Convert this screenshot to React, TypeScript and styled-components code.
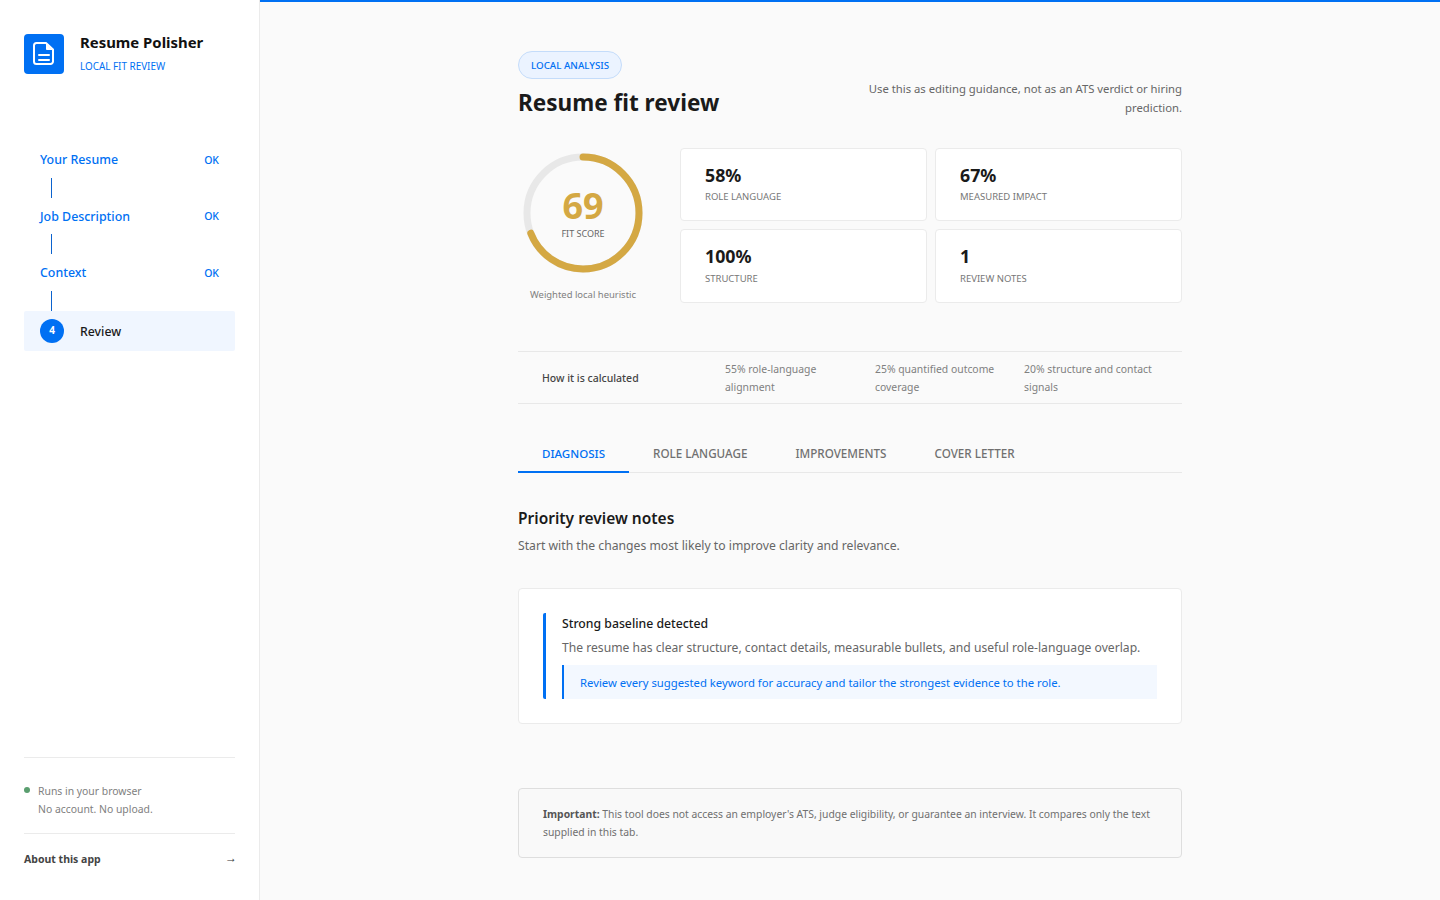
import React from "react";
import styled, { createGlobalStyle } from "styled-components";

const Global = createGlobalStyle`
  html, body { margin: 0; padding: 0; background: #fafafa; }
  * { box-sizing: border-box; }
  body { font-family: "Noto Sans", sans-serif; color: #1a1a1a; }
`;
const Shell = styled.div`display: flex; min-height: 900px; height: 900px; overflow: hidden;`;
const Sidebar = styled.aside`
  width: 260px; flex: none; background: #fff; border-right: 1px solid #ebebeb;
  padding: 34px 24px 0; display: flex; flex-direction: column;
`;
const Brand = styled.div`display: flex; gap: 16px; height: 40px;`;
const LogoBox = styled.div`
  width: 40px; height: 40px; border-radius: 4px; background: #0070f3;
  display: flex; align-items: center; justify-content: center;
`;
const BrandText = styled.div`display: flex; flex-direction: column;`;
const BrandName = styled.div`font-size: 14.9px; font-weight: 700; line-height: 18px; margin-top: -1px; color: #111;`;
const BrandSub = styled.div`font-size: 9.9px; line-height: 14px; margin-top: 8px; color: #0070f3; text-transform: uppercase;`;
const Steps = styled.nav`margin-top: 67.25px; display: flex; flex-direction: column;`;
const StepRow = styled.div`
  height: 36.5px; padding: 0 16px; display: flex; align-items: center; justify-content: space-between;
  font-size: 12.4px; font-weight: 500; color: #0070f3;
`;
const StepOk = styled.span`font-size: 10.5px; font-weight: 500;`;
const Connector = styled.div`width: 1px; height: 20px; background: #0c63ce; margin-left: 27px;`;
const ActiveRow = styled.div`
  height: 40px; padding: 1px 16px 0; display: flex; align-items: center; gap: 16px;
  background: #f0f6ff; border-radius: 2px; font-size: 12.3px; font-weight: 500; color: #1a1a1a;
`;
const StepNum = styled.span`
  width: 24px; height: 24px; margin-top: -1px; padding-bottom: 2px; border-radius: 50%; background: #0070f3; color: #fff;
  display: flex; align-items: center; justify-content: center; font-size: 10px; font-weight: 700;
`;
const SideFoot = styled.div`margin-top: auto; display: flex; flex-direction: column;`;
const Privacy = styled.div`
  border-top: 1px solid #ebebeb; border-bottom: 1px solid #ebebeb; height: 77px; padding-top: 24px;
  font-size: 10.4px; line-height: 18px; color: #808080; position: relative;
`;
const Dot = styled.span`
  position: absolute; left: 0; top: 29px; width: 6px; height: 6px; border-radius: 50%; background: #5a9e6f;
`;
const PrivacyLine = styled.div`padding-left: 14px;`;
const About = styled.div`
  height: 66px; padding-top: 16px; display: flex; justify-content: space-between; align-items: flex-start;
  font-size: 10.5px; line-height: 18px; font-weight: 700; color: #444;
`;
const AboutArrow = styled.span`font-size: 12px; line-height: 15px; margin-right: -2px; color: #333;`;
const Main = styled.main`flex: 1; border-top: 2px solid #0070f3; display: flex; justify-content: center;`;
const Content = styled.div`width: 664px; padding-top: 49px;`;
const Header = styled.header`display: flex; justify-content: space-between; align-items: flex-end;`;
const Pill = styled.div`
  display: inline-block; height: 28px; line-height: 28px; padding: 0 12px; border-radius: 14px;
  background: #ebf3ff; border: 1px solid #c4dcfa; color: #0070f3; font-size: 9.75px; font-weight: 500; text-transform: uppercase;
`;
const Title = styled.h1`margin: 7px 0 0; font-size: 22.55px; line-height: 34px; font-weight: 700; color: #1a1a1a;`;
const HeaderNote = styled.p`
  margin: 0 0 3px; width: 330px; text-align: right; font-size: 11.3px; line-height: 19px; color: #666;
`;
const Summary = styled.section`display: flex; gap: 32px; margin-top: 28px;`;
const ScoreCol = styled.div`width: 130px; flex: none; display: flex; flex-direction: column; align-items: center; padding-top: 5px;`;
const Ring = styled.div`position: relative; width: 120px; height: 120px;`;
const RingText = styled.div`
  position: absolute; inset: 0; padding-top: 3px; display: flex; flex-direction: column; align-items: center; justify-content: center;
`;
const ScoreNum = styled.div`font-size: 36px; line-height: 34px; font-weight: 700; color: #d4a843;`;
const ScoreLabel = styled.div`font-size: 9px; line-height: 14px; color: #666; text-transform: uppercase; margin-top: 4px;`;
const ScoreNote = styled.div`font-size: 9.45px; line-height: 14px; color: #808080; margin-top: 15px;`;
const Stats = styled.div`flex: 1; display: grid; grid-template-columns: 1fr 1fr; grid-template-rows: 73px 74px; gap: 8px;`;
const Stat = styled.div<{ $tall?: boolean }>`
  background: #fff; border: 1px solid #ebebeb; border-radius: 4px; padding: 0 24px ${(p) => (p.$tall ? "2px" : "3px")};
  display: flex; flex-direction: column; justify-content: center;
`;
const StatValue = styled.div`font-size: 17.8px; line-height: 24px; font-weight: 700; color: #1a1a1a;`;
const StatLabel = styled.div<{ $tall?: boolean }>`
  font-size: 9.5px; line-height: 14px; margin-top: ${(p) => (p.$tall ? "4px" : "3px")}; color: #777; text-transform: uppercase;
`;
const Calc = styled.section`
  margin-top: 48px; height: 53px; display: grid; grid-template-columns: 183px 150px 149px 1fr; align-items: center; padding-left: 24px;
  border-top: 1px solid #e8e8e8; border-bottom: 1px solid #e8e8e8;
`;
const CalcLabel = styled.div`font-size: 10.5px; font-weight: 500; color: #444;`;
const CalcItem = styled.div`font-size: 10.4px; line-height: 18px; color: #808080; padding-right: 20px;`;
const Tabs = styled.div`margin-top: 31px; height: 38px; display: flex; border-bottom: 1px solid #e8e8e8;`;
const Tab = styled.div<{ $active?: boolean }>`
  height: 38px; padding: 0 24px; line-height: 37px; font-weight: 500; text-transform: uppercase;
  font-size: ${(p) => (p.$active ? "11.55px" : "11.65px")};
  color: ${(p) => (p.$active ? "#0070f3" : "#707070")};
  border-bottom: 2px solid ${(p) => (p.$active ? "#0070f3" : "transparent")};
`;
const SectionTitle = styled.h2`margin: 33px 0 0; font-size: 15.5px; line-height: 24px; font-weight: 600; color: #1a1a1a;`;
const SectionSub = styled.p`margin: 7px 0 0; font-size: 12.2px; line-height: 18px; color: #666;`;
const NoteCard = styled.section`
  margin-top: 33px; height: 136px; background: #fff; border: 1px solid #ebebeb; border-radius: 4px; padding: 24px;
`;
const Note = styled.div`border-left: 3px solid #0070f3; border-radius: 2px; padding-left: 16px; height: 86px; display: flex; flex-direction: column;`;
const NoteTitle = styled.div`font-size: 12.25px; line-height: 20px; margin-top: 1px; font-weight: 500; color: #1a1a1a;`;
const NoteBody = styled.div`font-size: 12.14px; line-height: 20px; margin-top: 4px; color: #666; white-space: nowrap;`;
const Tip = styled.div`
  margin-top: 7px; height: 34px; line-height: 35px; background: #f3f8ff; border-left: 2px solid #0070f3; padding-left: 16px;
  font-size: 11.3px; color: #0070f3;
`;
const Disclaimer = styled.section`
  margin-top: 64px; height: 70px; border: 1px solid #dedede; border-radius: 4px; padding: 16px 24px; background: #f9f9f9;
  font-size: 10.35px; line-height: 18px; color: #707070;
`;
const Strong = styled.strong`font-weight: 700; color: #555;`;

const DocIcon = () => (
  <svg width="24" height="26" viewBox="0 0 24 26" fill="none" stroke="#fff" strokeWidth="2" strokeLinejoin="round" strokeLinecap="round">
    <path d="M2 4.5A2.5 2.5 0 0 1 4.5 2H14l7 6.5v12a2.5 2.5 0 0 1-2.5 2.5h-14A2.5 2.5 0 0 1 2 20.5z" />
    <path d="M14.5 3v5.5h5.5" fill="#fff" strokeWidth="1" />
    <path d="M7 14h10M7 19h10" />
  </svg>
);

const R = 56;
const C = 2 * Math.PI * R;

export default function App() {
  return (
    <Shell>
      <Global />
      <Sidebar>
        <Brand>
          <LogoBox><DocIcon /></LogoBox>
          <BrandText>
            <BrandName>Resume Polisher</BrandName>
            <BrandSub>Local fit review</BrandSub>
          </BrandText>
        </Brand>
        <Steps>
          <StepRow>Your Resume<StepOk>OK</StepOk></StepRow>
          <Connector />
          <StepRow>Job Description<StepOk>OK</StepOk></StepRow>
          <Connector />
          <StepRow>Context<StepOk>OK</StepOk></StepRow>
          <Connector />
          <ActiveRow><StepNum>4</StepNum>Review</ActiveRow>
        </Steps>
        <SideFoot>
          <Privacy>
            <Dot />
            <PrivacyLine>Runs in your browser</PrivacyLine>
            <PrivacyLine>No account. No upload.</PrivacyLine>
          </Privacy>
          <About><span>About this app</span><AboutArrow>→</AboutArrow></About>
        </SideFoot>
      </Sidebar>
      <Main>
        <Content>
          <Header>
            <div>
              <Pill>Local analysis</Pill>
              <Title>Resume fit review</Title>
            </div>
            <HeaderNote>Use this as editing guidance, not as an ATS verdict or hiring prediction.</HeaderNote>
          </Header>
          <Summary>
            <ScoreCol>
              <Ring>
                <svg width="120" height="120" viewBox="0 0 120 120">
                  <circle cx="60" cy="60" r={R} fill="none" stroke="#e8e8e8" strokeWidth="7" />
                  <circle cx="60" cy="60" r={R} fill="none" stroke="#d4a843" strokeWidth="7" strokeLinecap="round"
                    strokeDasharray={`${C * 0.69} ${C}`} transform="rotate(-90 60 60)" />
                </svg>
                <RingText>
                  <ScoreNum>69</ScoreNum>
                  <ScoreLabel>Fit score</ScoreLabel>
                </RingText>
              </Ring>
              <ScoreNote>Weighted local heuristic</ScoreNote>
            </ScoreCol>
            <Stats>
              <Stat><StatValue>58%</StatValue><StatLabel>Role language</StatLabel></Stat>
              <Stat><StatValue>67%</StatValue><StatLabel>Measured impact</StatLabel></Stat>
              <Stat $tall><StatValue>100%</StatValue><StatLabel $tall>Structure</StatLabel></Stat>
              <Stat $tall><StatValue>1</StatValue><StatLabel $tall>Review notes</StatLabel></Stat>
            </Stats>
          </Summary>
          <Calc>
            <CalcLabel>How it is calculated</CalcLabel>
            <CalcItem>55% role-language alignment</CalcItem>
            <CalcItem>25% quantified outcome coverage</CalcItem>
            <CalcItem>20% structure and contact signals</CalcItem>
          </Calc>
          <Tabs>
            <Tab $active>Diagnosis</Tab>
            <Tab>Role language</Tab>
            <Tab>Improvements</Tab>
            <Tab>Cover letter</Tab>
          </Tabs>
          <SectionTitle>Priority review notes</SectionTitle>
          <SectionSub>Start with the changes most likely to improve clarity and relevance.</SectionSub>
          <NoteCard>
            <Note>
              <NoteTitle>Strong baseline detected</NoteTitle>
              <NoteBody>The resume has clear structure, contact details, measurable bullets, and useful role-language overlap.</NoteBody>
              <Tip>Review every suggested keyword for accuracy and tailor the strongest evidence to the role.</Tip>
            </Note>
          </NoteCard>
          <Disclaimer>
            <Strong>Important:</Strong> This tool does not access an employer's ATS, judge eligibility, or guarantee an interview. It compares only the text supplied in this tab.
          </Disclaimer>
        </Content>
      </Main>
    </Shell>
  );
}
